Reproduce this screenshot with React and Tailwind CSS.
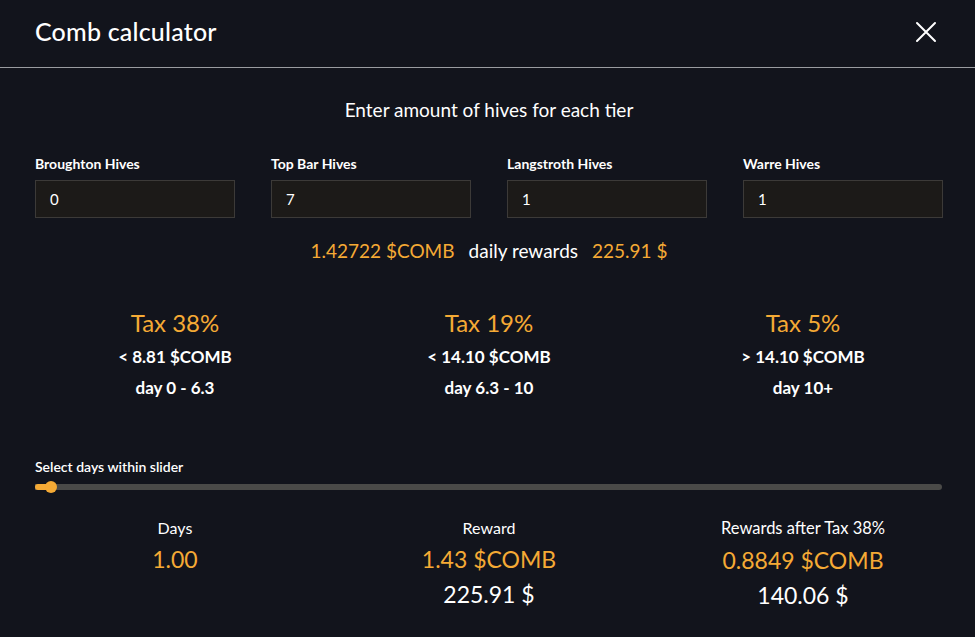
import React from "react";

const inputs = [
  { label: "Broughton Hives", value: "0" },
  { label: "Top Bar Hives", value: "7" },
  { label: "Langstroth Hives", value: "1" },
  { label: "Warre Hives", value: "1" },
];

const taxes = [
  { tax: "Tax 38%", limit: "< 8.81 $COMB", days: "day 0 - 6.3" },
  { tax: "Tax 19%", limit: "< 14.10 $COMB", days: "day 6.3 - 10" },
  { tax: "Tax 5%", limit: "> 14.10 $COMB", days: "day 10+" },
];

export default function App() {
  return (
    <div
      className="w-[975px] h-[637px] bg-[#12141c] text-white overflow-hidden"
      style={{ fontFamily: "Lato, 'Noto Sans', sans-serif" }}
    >
      <div className="h-[68px] flex items-center justify-between pl-[35px] pr-[38px] pb-[4px] border-b border-[#9a9ca0]">
        <h1 className="text-[25px] font-medium leading-none tracking-[0.2px]">Comb calculator</h1>
        <svg width="22" height="22" viewBox="0 0 22 22" fill="none" stroke="white" strokeWidth="2" strokeLinecap="round">
          <path d="M2 2L20 20M20 2L2 20" />
        </svg>
      </div>

      <div className="pl-[35px] pr-[32px]">
        <p className="text-center text-[19px] leading-none mt-[32px]">Enter amount of hives for each tier</p>

        <div className="grid grid-cols-4 gap-[36px] mt-[38px]">
          {inputs.map((i) => (
            <div key={i.label} className="flex flex-col">
              <label className="text-[14px] font-bold leading-none mb-[9px]">{i.label}</label>
              <div className="h-[38px] bg-[#1c1a18] border border-[#3c3a38] flex items-center pl-[14px] text-[15px]">
                {i.value}
              </div>
            </div>
          ))}
        </div>

        <div className="flex justify-center items-center gap-[14px] mt-[23px] text-[19px] leading-none">
          <span className="text-[#f5aa35]">1.42722 $COMB</span>
          <span>daily rewards</span>
          <span className="text-[#f5aa35]">225.91 $</span>
        </div>
      </div>

      <div className="grid grid-cols-3 w-[942px] ml-[18px] mt-[51px]">
        {taxes.map((t) => (
          <div key={t.tax} className="flex flex-col items-center">
            <span className="text-[24px] text-[#f5aa35] leading-none">{t.tax}</span>
            <span className="text-[17px] font-bold leading-none mt-[13px]">{t.limit}</span>
            <span className="text-[17px] font-bold leading-none mt-[14px]">{t.days}</span>
          </div>
        ))}
      </div>

      <div className="pl-[35px] pr-[33px] mt-[64px]">
        <p className="text-[14px] font-semibold leading-none">Select days within slider</p>
        <div className="relative mt-[10px] h-[6px] rounded-r-full bg-[#4a4a48]">
          <div className="absolute left-0 top-0 h-[6px] w-[16px] rounded-l-full bg-[#f5aa35]" />
          <div className="absolute left-[10px] top-[-3px] w-[12px] h-[12px] rounded-full bg-[#f5aa35]" />
        </div>
      </div>

      <div className="grid grid-cols-3 w-[942px] ml-[18px] mt-[30px]">
        <div className="flex flex-col items-center">
          <span className="text-[16px] leading-none">Days</span>
          <span className="text-[23px] text-[#f5aa35] leading-none mt-[12px]">1.00</span>
        </div>
        <div className="flex flex-col items-center">
          <span className="text-[16px] leading-none">Reward</span>
          <span className="text-[23px] text-[#f5aa35] leading-none mt-[12px]">1.43 $COMB</span>
          <span className="text-[23px] leading-none mt-[12px]">225.91 $</span>
        </div>
        <div className="flex flex-col items-center">
          <span className="text-[16.5px] leading-none">Rewards after Tax 38%</span>
          <span className="text-[23px] text-[#f5aa35] leading-none mt-[12px]">0.8849 $COMB</span>
          <span className="text-[23px] leading-none mt-[12px]">140.06 $</span>
        </div>
      </div>
    </div>
  );
}
